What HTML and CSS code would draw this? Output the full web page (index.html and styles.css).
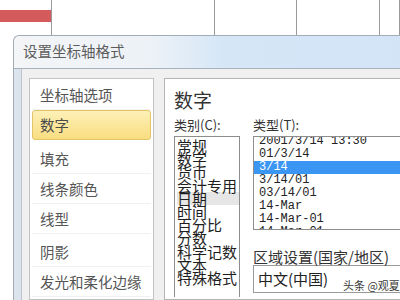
FILE: index.html
```html
<!DOCTYPE html>
<html lang="zh">
<head>
    <meta charset="UTF-8">
    <title>设置坐标轴格式</title>
    <link rel="stylesheet" href="styles.css">
</head>
<body>
    <div class="sheet">
        <div class="cell"><div class="redbar"></div></div>
        <div class="cell"></div>
        <div class="cell"></div>
        <div class="cell"></div>
        <div class="cell"></div>
    </div>

    <div class="dialog">
        <div class="title">设置坐标轴格式</div>
        <div class="frame">
            <ul class="nav">
                <li>坐标轴选项</li>
                <li class="active">数字</li>
                <li>填充</li>
                <li>线条颜色</li>
                <li class="sep">线型</li>
                <li>阴影</li>
                <li>发光和柔化边缘</li>
            </ul>
            <div class="pane">
                <h2>数字</h2>
                <div class="cols">
                    <div class="col-cat">
                        <div class="label">类别(C):</div>
                        <ul class="catlist">
                            <li>常规</li>
                            <li>数字</li>
                            <li>货币</li>
                            <li>会计专用</li>
                            <li class="picked">日期</li>
                            <li>时间</li>
                            <li>百分比</li>
                            <li>分数</li>
                            <li>科学记数</li>
                            <li>文本</li>
                            <li>特殊格式</li>
                        </ul>
                    </div>
                    <div class="col-type">
                        <div class="label">类型(T):</div>
                        <ul class="typelist">
                            <li>2001/3/14 13:30</li>
                            <li>01/3/14</li>
                            <li class="selected">3/14</li>
                            <li>3/14/01</li>
                            <li>03/14/01</li>
                            <li>14-Mar</li>
                            <li>14-Mar-01</li>
                            <li>14-Mar-01</li>
                        </ul>
                        <div class="label locale">区域设置(国家/地区)</div>
                        <div class="combo">中文(中国)</div>
                    </div>
                </div>
            </div>
        </div>
    </div>

    <div class="mark">头条 @观夏</div>
</body>
</html>
```

FILE: styles.css
```css
body {
    margin: 0;
    width: 400px;
    height: 300px;
    overflow: hidden;
    background: #fff;
    font-family: "Noto Sans CJK SC", sans-serif;
    position: relative;
}
ul {
    list-style: none;
    margin: 0;
    padding: 0;
}

/* spreadsheet behind the dialog */
.sheet {
    display: grid;
    grid-template-columns: 52px 163px 82px 83px 1fr;
    height: 35px;
}
.cell {
    border-right: 1px solid #9a9a9a;
}
.redbar {
    margin-top: 10px;
    height: 12px;
    background: #d55a5c;
}

/* dialog */
.dialog {
    margin-left: 13px;
    height: 264px;
    overflow: hidden;
    border-left: 1px solid #a3acb5;
    border-top: 1px solid #a3acb5;
    border-top-left-radius: 6px;
    background: #f0f0f0;
}
.title {
    height: 32px;
    line-height: 30px;
    padding-left: 9px;
    font-size: 14.5px;
    color: #5c5c5c;
    border-bottom: 1px solid #a9b1ba;
    border-top-left-radius: 6px;
    background: linear-gradient(to right, #f3f5f7 0, #edf2f7 35%, #d5e6f7 55%, #d2e4f6 100%);
}
.frame {
    display: flex;
    gap: 10px;
    height: 222px;
    padding: 9px 0 0 8px;
    border-left: 7px solid #dbe4ed;
    box-shadow: inset 1px 0 0 #bcc5ce;
}

/* left navigation */
.nav {
    width: 125px;
    box-sizing: border-box;
    padding: 1px 2px;
    background: #fff;
    border: 1px solid #c3c3c3;
    font-size: 14.5px;
    color: #555;
}
.nav li {
    height: 29px;
    line-height: 29px;
    padding-left: 8px;
    border-bottom: 1px solid #f1f1f1;
}
.nav li.active {
    height: 28px;
    line-height: 28px;
    padding-left: 7px;
    margin-bottom: 4px;
    border: 1px solid #e3c567;
    border-radius: 3px;
    background: linear-gradient(#fdf0b8, #f9dd80);
    color: #4a4a4a;
}
.nav li.sep {
    margin-bottom: 3px;
}

/* right pane */
.pane {
    flex: 1;
    background: #fff;
    border: 1px solid #b5b5b5;
    border-right: none;
    padding: 9px 0 0 9px;
    color: #222;
}
.pane h2 {
    margin: 0;
    font-size: 19px;
    font-weight: normal;
    line-height: 24px;
    color: #333;
}
.cols {
    display: flex;
    gap: 13px;
    margin-top: 6px;
}
.label {
    font-size: 13px;
    line-height: 14px;
    height: 14px;
    margin-bottom: 4px;
    color: #333;
    white-space: nowrap;
}
.col-cat {
    width: 66px;
}
.catlist {
    height: 158px;
    overflow: hidden;
    border: 1px solid #8d8d8d;
    border-bottom: none;
    padding: 2px 0 0 2px;
    font-size: 15px;
    line-height: 13.2px;
    color: #1e1e1e;
}
.catlist li {
    white-space: nowrap;
}
.catlist li.picked {
    background: #e6e6e6;
}
.col-type {
    flex: 1;
}
.typelist {
    height: 92px;
    overflow: hidden;
    border: 1px solid #8d8d8d;
    border-right: none;
    font-family: "Liberation Mono", monospace;
    font-size: 12px;
    line-height: 13px;
    color: #222;
}
.typelist li {
    padding-left: 5px;
    white-space: nowrap;
}
.typelist li:first-child {
    margin-top: -2px;
}
.typelist li.selected {
    background: #3a96f2;
    color: #fff;
}
.label.locale {
    margin-top: 19px;
    font-size: 15px;
    line-height: 16px;
    height: 16px;
    margin-bottom: 0;
}
.combo {
    height: 26px;
    line-height: 26px;
    border: 1px solid #9a9a9a;
    border-right: none;
    padding-left: 4px;
    font-size: 15px;
    color: #222;
}

.mark {
    position: absolute;
    left: 343px;
    top: 277px;
    font-size: 11px;
    color: #3a3a3a;
}
```
